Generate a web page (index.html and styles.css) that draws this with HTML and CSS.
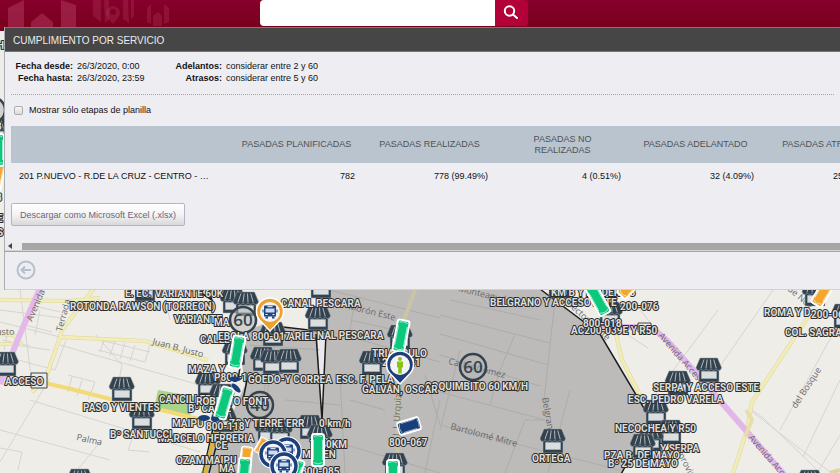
FILE: index.html
```
<!DOCTYPE html>
<html lang="es">
<head>
<meta charset="utf-8">
<meta name="viewport" content="width=device-width, initial-scale=1">
<title>Cumplimiento por servicio</title>
<link rel="stylesheet" href="styles.css">
</head>
<body>
<svg class="map" viewBox="0 0 840 473" preserveAspectRatio="xMinYMin slice" role="img" aria-label="Mapa">
  <defs>
    <g id="shop">
      <path d="M3 10h20v14H3z" fill="#33424f" stroke="#aeb6bb" stroke-width=".5"/>
      <path d="M5.500 13.500h15v7h-15z" fill="#dcdedd" stroke="#9fb3c1" stroke-width=".7"/>
      <path d="M4 0h17.500L25.500 9.500q-.3 3-2.800 3q-2.200 0-2.500-2q-.5 2-2.600 2t-2.500-2q-.5 2-2.600 2t-2.500-2q-.5 2-2.500 2t-2.500-2q-.4 2-2.400 2T0 9.500z" fill="#33424f" stroke="#9aa3a9" stroke-width=".5"/>
      <path d="M8 1.500L5 10M11.200 1.500L10 10M14.500 1.500L15 10M17.700 1.500L20.200 10" stroke="#bfc5c8" stroke-width=".9"/>
    </g>
    <g id="speed">
      <circle r="13" fill="#b5b5b2" fill-opacity=".5" stroke="#34434f" stroke-width="2.500"/>
    </g>
    <g id="bus">
      <path d="M-5 -6.500h10q1 0 1 1V4.500H-6v-10q0-1 1-1z" fill="#1d4484"/>
      <path d="M-4.500 -3.500h9v4h-9z" fill="#cfdbec"/>
      <path d="M-2.500 -5.300h5M-4.500 2.500h2M2.500 2.500h2" stroke="#fff" stroke-width="1"/>
      <path d="M-4.500 4.500h2.500v2h-2.500zM2 4.500h2.500v2H2zM-7.500 -2.500h1v3h-1zM6.500 -2.500h1v3h-1z" fill="#1d4484"/>
    </g>
    <g id="pin">
      <path d="M0 19L-10 8.500A13.500 13.500 0 1 1 10 8.500z" stroke="#fff" stroke-width="1.500"/>
      <circle r="10" fill="#f4f4f2"/>
    </g>
    <g id="vehicle">
      <rect x="-6" y="-16" width="12" height="32" rx="2.500" stroke="#fff" stroke-width="2"/>
      <path d="M-4 -13.500q4-2 8 0M-4.500 12.500q4.500 3 9 0M-4.500 -10v20M4.500 -10v20" fill="none" stroke="#fff" stroke-opacity=".75" stroke-width=".8"/>
    </g>
    <g id="rider">
      <circle r="12" fill="#eef1f5" stroke="#fff" stroke-width="5.500"/>
      <circle r="12" fill="none" stroke="#1d3f7c" stroke-width="3.500"/>
      <use href="#bus"/>
    </g>
  </defs>

  <rect width="840" height="473" fill="#eeede8"/>

  <g class="lane">
    <path d="M0 322L60 337M20 290L32 383M0 310L62 318M60 345L210 388M30 400L200 452M0 462L50 378M96 335L122 365L115 400M100 340L150 352M150 345L145 362L98 350M66 340L55 370L0 355M68 375L95 382L88 400M137 425L128 450L150 452M0 448L22 452L18 470M100 442L75 473M0 430L110 460M25 325L52 332M15 345L50 350M30 305L60 312M165 300L170 320M105 338L100 352M115 340L110 356M125 343L120 359M135 345L130 361M72 377L68 392M82 380L77 396M2 340L30 346M8 330L4 350M40 310L35 335"/>
    <path d="M718 310L655 395M773 290L700 395M835 330L780 430M840 380L803 457M750 410L840 480M752 410L762 417L803 456L820 473M840 435L818 472M640 310L650 322M620 330L648 348"/>
  </g>

  <path d="M158 390L197 397L190 416L154 408z" fill="#a9d48a"/>
  <path class="road casing" d="M0 300L70 301L100 298M60 337L145 341L208 360M95 287L62 330L60 337L45 380L32 392M0 334L14 335L22 345M0 344H16M808 317L752 402L747 430L733 473M615 330L622 360L640 395L650 410M840 470L830 473"/>
  <path class="road" d="M0 300L70 301L100 298M60 337L145 341L208 360M95 287L62 330L60 337L45 380L32 392M0 334L14 335L22 345M0 344H16M808 317L752 402L747 430L733 473M615 330L622 360L640 395L650 410"/>
  <path d="M45 383L75 390L110 399L170 412L202 420" fill="none" stroke="#f4d977" stroke-width="4"/>
  <path d="M45 278Q25 320 0 384" fill="none" stroke="#e3b9ec" stroke-width="6"/>
  <path d="M596 327H648Q660 331 680 355L716 396L787 478" fill="none" stroke="#e1b7ea" stroke-width="6"/>
  <path d="M746 410L752 420L745 437" fill="none" stroke="#e7dfab" stroke-width="4"/>

  <path d="M238 335L270 321L283 327L317 332L322 420L326 332L320 286H536L600 334L651 420L620 476H200L212 440L234 410L245 385z" fill="#bcbbb9"/>
  <g class="lane inner">
    <path d="M440 315L550 343M440 334L548 365M440 355L540 386M440 392L545 420M330 290L440 318M325 330L440 362M515 334L498 375L490 405M555 300L544 400M545 420L525 420L505 473M460 350L440 430M425 375L440 425M330 440L440 473M440 425L620 470M570 390L548 473M350 400L385 410M340 375L345 473M275 345L262 400M285 400L340 405M250 345L320 350M270 370L262 450M350 320L395 330M355 300L350 330M450 300L540 320M440 400L425 473"/>
  </g>
  <path d="M417 285L400 330L397 473" fill="none" stroke="#c9c5a4" stroke-width="4"/>
  <path d="M319 340L324 340L322 405z" fill="#e9e8ef"/>
  <g fill="none" stroke="#1c1c1c" stroke-width="1.500">
    <path d="M536 286L600 334L651 420L620 476M283 327L326 332M316 334L322 420L326 334M190 286L212 300L207 288"/>
    <path d="M213 428L203 473M220 432L209 473M245 335L238 380M292 420L285 437M247 380L243 400"/>
  </g>
  <path d="M217 425L205 473" stroke="#d9b53f" stroke-width="4"/>
  <g fill="#ecebe6" stroke="#444" stroke-width="1"><path d="M31 373h16v15H31zM638 323h13v9h-13z"/></g>

  <g class="street">
    <text transform="translate(32 322) rotate(-67)">Avenida A</text>
    <text transform="translate(62 332) rotate(-75)">Terrada</text>
    <text x="-4" y="335">usto</text>
    <text transform="translate(152 344) rotate(15)">Juan B. Justo</text>
    <text transform="translate(76 440) rotate(12)">Palma</text>
    <text transform="translate(348 309) rotate(14)">Morón Este</text>
    <text transform="translate(458 291) rotate(14)">Monteagudo</text>
    <text transform="translate(448 364) rotate(14)">Carlos Gómez</text>
    <text transform="translate(450 429) rotate(15)">Bartolomé Mitre</text>
    <text transform="translate(542 398) rotate(80)">Belgrano</text>
    <text transform="translate(399 436) rotate(-87)">J. J. Urquiza</text>
    <text transform="translate(658 336) rotate(49)">Avenida Acceso</text>
    <text transform="translate(748 438) rotate(49)">Avenida Acceso</text>
    <text transform="translate(796 409) rotate(-57)">del Bosque</text>
    <text transform="translate(567 305) rotate(42)">Sector Oeste</text>
    <text transform="translate(787 290) rotate(40)">de Nov</text>
    <text transform="translate(678 455) rotate(62)">provincial</text>
  </g>

  <g>
    <use href="#shop" x="132" y="277"/><use href="#shop" x="220" y="289"/><use href="#shop" x="233" y="292"/>
    <use href="#shop" x="-7" y="352"/><use href="#shop" x="109" y="377"/><use href="#shop" x="129" y="405"/>
    <use href="#shop" x="67" y="469"/><use href="#shop" x="195" y="372"/><use href="#shop" x="222" y="341"/>
    <use href="#shop" x="209" y="384"/><use href="#shop" x="211" y="408"/><use href="#shop" x="308" y="274"/>
    <use href="#shop" x="305" y="306"/><use href="#shop" x="250" y="347"/><use href="#shop" x="260" y="350"/>
    <use href="#shop" x="276" y="349"/><use href="#shop" x="359" y="351"/><use href="#shop" x="387" y="325"/>
    <use href="#shop" x="540" y="429"/><use href="#shop" x="546" y="274"/><use href="#shop" x="597" y="302"/>
    <use href="#shop" x="696" y="358"/><use href="#shop" x="665" y="371"/><use href="#shop" x="643" y="400"/>
    <use href="#shop" x="658" y="420"/><use href="#shop" x="638" y="427"/><use href="#shop" x="630" y="434"/>
    <use href="#shop" x="802" y="282"/><use href="#shop" x="831" y="304"/><use href="#shop" x="797" y="470"/>
    <use href="#shop" x="255" y="419"/><use href="#shop" x="267" y="420"/><use href="#shop" x="297" y="415"/>
    <use href="#shop" x="307" y="425"/><use href="#shop" x="382" y="453"/><use href="#shop" x="-17" y="118"/>
    <use href="#shop" x="260" y="322"/>
  </g>

  <g class="limit">
    <use href="#speed" x="243" y="320"/><text x="243" y="326">60</text>
    <use href="#speed" x="260" y="405"/><text x="260" y="411">40</text>
    <use href="#speed" x="473" y="367"/><text x="473" y="373">60</text>
    <use href="#speed" x="-8" y="110"/>
  </g>

  <g class="label">
    <text x="125" y="297">E. EC.</text><text x="155" y="297">VARIANTE 60K</text>
    <text x="70" y="310">ROTONDA RAWSON (TORREON)</text>
    <text x="174" y="323">VARIANTE</text><text x="214" y="326">MA</text>
    <text x="200" y="343">CALLE</text><text x="218" y="340">EBOLA</text>
    <text x="281" y="307">CANAL PESCARA</text>
    <text x="317" y="339">NAL PESCARA</text><text x="288" y="340">ARIEL</text><text x="252" y="340">800-017</text>
    <text x="188" y="373">MAZA Y</text><text x="214" y="381">P800-109</text>
    <text x="248" y="383">GOEDO-Y CORREA</text><text x="336" y="383">ESC. F. PELA</text>
    <text x="372" y="357">TRIANGULO</text><text x="382" y="366">200-041</text>
    <text x="425" y="390">COQUIMBITO 60 KM/H</text><text x="362" y="393">GALVÁN, OSCAR</text>
    <text x="159" y="403">CANCILLER</text><text x="188" y="412">Bº CALLE</text><text x="196" y="405">ROBERTO FONT</text>
    <text x="172" y="427">MAIPU</text><text x="229" y="427">ZO Y TERRE</text><text x="206" y="430">800-118</text>
    <text x="286" y="427">ERR</text><text x="319" y="427">0 km/h</text>
    <text x="158" y="442">MARCELO HERRERIA</text><text x="215" y="449">CE</text>
    <text x="176" y="464">OZAMI</text><text x="205" y="464">MAIPU</text><text x="219" y="472">MA</text>
    <text x="310" y="448">T. 40KM</text><text x="302" y="458">MAYEN</text><text x="301" y="475">800-085</text>
    <text x="389" y="446">800-067</text>
    <text x="83" y="411">PASO Y VIENTES</text><text x="110" y="438">Bº SANTUCCI</text><text x="5" y="385">ACCESO</text>
    <text x="551" y="296">KM B Y LINDERO 8</text><text x="490" y="306">BELGRANO Y ACCESO ESTE</text>
    <text x="571" y="334">AC200-039E Y R50</text><text x="583" y="327">800-018</text><text x="620" y="310">200-076</text>
    <text x="532" y="462">ORTEGA</text>
    <text x="653" y="391">SERPA Y ACCESO ESTE</text><text x="628" y="403">ESC. PEDRO VARELA</text>
    <text x="615" y="432">NECOCHEA Y R50</text><text x="660" y="452">Y SERPA</text>
    <text x="604" y="459">PZA B. DE MAYO</text><text x="608" y="467">Bº 25 DE MAYO</text>
    <text x="764" y="316">ROMA Y D</text><text x="811" y="318">200-067</text><text x="785" y="336">COL. SAGRADO</text>
    <text x="-3" y="49">H</text><text x="-4" y="130">3</text><text x="-4" y="201">8</text><text x="-3" y="222">E</text><text x="-3" y="236">S</text>
  </g>

  <g fill="#f2a62e">
    <use href="#vehicle" transform="translate(-3 176) rotate(12)"/>
    <use href="#vehicle" transform="translate(824 291) rotate(31)"/>
    <use href="#vehicle" transform="translate(632 284) rotate(45)"/>
    <use href="#vehicle" transform="translate(262 446) rotate(28) scale(.8 .5)"/>
    <use href="#vehicle" transform="translate(246 458) rotate(8) scale(.9 .7)"/>
  </g>
  <g fill="#0bc87d">
    <use href="#vehicle" transform="translate(-2 150)"/>
    <use href="#vehicle" transform="translate(401 336) rotate(11)"/>
    <use href="#vehicle" transform="translate(237 352) rotate(10)"/>
    <use href="#vehicle" transform="translate(224 403) rotate(16)"/>
    <use href="#vehicle" transform="translate(598 300) rotate(-29)"/>
    <use href="#vehicle" transform="translate(318 450)"/>
    <use href="#vehicle" transform="translate(393 476)"/>
    <use href="#vehicle" transform="translate(244 474) rotate(5)"/>
    <use href="#vehicle" transform="translate(294 475) rotate(20)"/>
  </g>
  <g fill="#183f7c">
    <use href="#vehicle" transform="translate(409 426) rotate(73) scale(1.050 .7)"/>
    <ellipse cx="235" cy="379" rx="6" ry="2.500"/><ellipse cx="236" cy="388" rx="6" ry="2.500" transform="rotate(45 236 388)"/>
    <ellipse cx="204" cy="418" rx="6" ry="3"/><ellipse cx="215" cy="419" rx="4" ry="2.500"/>
  </g>

  <use href="#rider" x="287" y="451"/><use href="#rider" x="273" y="454"/><use href="#rider" x="284" y="466"/>
  <use href="#pin" x="270" y="312" fill="#eda02c"/><use href="#bus" x="270" y="312"/>
  <use href="#pin" x="400" y="365" fill="#1d3f7c"/>
  <g fill="#8cc21e"><circle cx="400" cy="359" r="2"/><path d="M397 361.500h6v6h-1.200v6h-3.600v-6H397z"/></g>
</svg>

<header class="topbar">
  <svg class="crest" viewBox="0 0 170 31" aria-hidden="true">
    <g fill="#b23a62" fill-opacity=".5">
      <path d="M8 31V8L24 0V31zM61 0L76 5V31H61zM31 31V22L42 13L53 22V31z"/>
      <g fill-opacity=".3">
        <path d="M93 0h8v22l-8-6zM104 0h5v20l-4 3zM123 0h5l1 23-6-4zM131 0h3v16l-3 3z"/>
        <path fill-rule="evenodd" d="M106 13a7 7 0 0 1 14 0q0 4-7 11q-7-7-7-11zm4-1a3 3 0 0 0 6 0a3 3 0 0 0-6 0z"/>
        <path d="M147 8l4-4v20l-4-2zM153 16l5-4 4 4v10h-9zM164 4l5 4v14l-5 2z"/>
      </g>
    </g>
  </svg>
  <form class="search" role="search">
    <input class="search-box" type="search" aria-label="Buscar">
    <button class="search-go" type="button" aria-label="Buscar">
      <svg viewBox="0 0 16 16" aria-hidden="true"><circle cx="6.500" cy="6" r="4.700"/><path d="M10 9.500L14 13"/></svg>
    </button>
  </form>
</header>

<main class="panel">
  <h1 class="panel-title">CUMPLIMIENTO POR SERVICIO</h1>
  <div class="panel-body">
    <dl class="criteria">
      <dt>Fecha desde:</dt><dd>26/3/2020, 0:00</dd>
      <dt>Adelantos:</dt><dd>considerar entre 2 y 60</dd>
      <dt>Fecha hasta:</dt><dd>26/3/2020, 23:59</dd>
      <dt>Atrasos:</dt><dd>considerar entre 5 y 60</dd>
    </dl>
    <div class="option">
      <input type="checkbox" id="only-stages">
      <label for="only-stages">Mostrar sólo etapas de planilla</label>
    </div>
    <table class="report">
      <colgroup><col class="service"><col><col><col><col><col></colgroup>
      <thead>
        <tr><th aria-label="Servicio"></th><th>PASADAS PLANIFICADAS</th><th>PASADAS REALIZADAS</th><th>PASADAS NO<br>REALIZADAS</th><th>PASADAS ADELANTADO</th><th>PASADAS ATRASADO</th></tr>
      </thead>
      <tbody>
        <tr><td>201 P.NUEVO - R.DE LA CRUZ - CENTRO - …</td><td>782</td><td>778 (99.49%)</td><td>4 (0.51%)</td><td>32 (4.09%)</td><td>254 (32.48%)</td></tr>
      </tbody>
    </table>
    <button class="export" type="button">Descargar como Microsoft Excel (.xlsx)</button>
  </div>
  <div class="scroller" aria-hidden="true">
    <svg viewBox="0 0 4 6"><path d="M4 0v6L0 3z"/></svg>
    <span class="thumb"></span>
  </div>
  <footer class="panel-foot">
    <button class="back" type="button" aria-label="Volver">
      <svg viewBox="0 0 20 20" aria-hidden="true"><circle cx="10" cy="10" r="8.500"/><path d="M15 10H5.500M9 6.500L5.500 10L9 13.500"/></svg>
    </button>
  </footer>
</main>
</body>
</html>
```
FILE: styles.css
```
* { box-sizing: border-box; }

body {
  margin: 0;
  min-height: 100vh;
  overflow: hidden;
  position: relative;
  font: 9px/12px "Liberation Sans", Arial, sans-serif;
  color: #111113;
  background: #eeede8;
}

button, input { font: inherit; margin: 0; }

/* Map */
.map { position: absolute; inset: 0; width: 100%; height: 100vh; }
.lane { fill: none; stroke: #d6d5d1; stroke-width: 1; }
.inner { stroke: #adacaa; }
.road { fill: none; stroke: #f2ecb5; stroke-width: 3; }
.casing { stroke: #dcd6a6; stroke-width: 4; }
.street { font: 9px "Open Sans", sans-serif; fill: #68676b; }
.label {
  font: bold 10px Roboto, sans-serif;
  fill: #dededc;
  stroke: #2b2b2b;
  stroke-width: 2px;
  stroke-linejoin: round;
  paint-order: stroke;
}
.limit { font: 600 17px "Open Sans", sans-serif; fill: #34434f; text-anchor: middle; }

/* Top bar */
.topbar {
  position: relative;
  display: flex;
  height: 31px;
  background: linear-gradient(#86002c, #78001c);
}
.crest { width: 170px; height: 31px; margin-right: 90px; flex: none; }
.search { display: flex; height: 26px; }
.search-box {
  width: 235px;
  padding: 0 8px;
  border: 0;
  border-radius: 4px 0 0 4px;
  background: #fff;
  appearance: none;
}
.search-go {
  width: 33px;
  padding: 0 8px;
  border: 0;
  border-radius: 0 4px 4px 0;
  background: #b20038;
}
.search-go svg { display: block; width: 16px; height: 16px; fill: none; stroke: #fff; stroke-width: 2; stroke-linecap: round; }

/* Report window */
.panel {
  position: absolute;
  top: 27px;
  left: 5px;
  right: 0;
  overflow: hidden;
  background: #eeedf2;
  border-bottom: 1px solid #cfd0d6;
  box-shadow: -1px 0 0 #a9adb0;
}
.panel-title {
  margin: 0;
  padding: 2px 8px 0;
  border-top: 1px solid #77777a;
  border-bottom: 1px solid #77777a;
  background: #464646;
  color: #ececec;
  font-size: 10px;
  font-weight: normal;
  line-height: 21px;
}
.panel-body { padding: 8px 6px 16px; }
.criteria {
  display: grid;
  grid-template-columns: 62px 78px 63px auto;
  column-gap: 4px;
  justify-content: start;
  margin: 0;
  padding-bottom: 10px;
  border-bottom: 1px dotted #a4a4a8;
}
.criteria dt { font-weight: bold; text-align: right; }
.criteria dd { margin: 0; white-space: nowrap; }
.option { display: flex; align-items: center; gap: 6px; padding: 9px 3px 10px; }
.option input {
  appearance: none;
  width: 9px;
  height: 9px;
  border: 1px solid #adadb0;
  border-radius: 2px;
  background: linear-gradient(#f6f6f6, #dcdcdc);
}
.report { width: 884px; table-layout: fixed; border-collapse: collapse; }
.report .service { width: 219px; }
.report th {
  height: 37px;
  padding: 0 8px;
  background: #b9c4ce;
  color: #4c5257;
  font-weight: normal;
  line-height: 11px;
}
.report td { height: 26px; padding: 0 8px; text-align: right; white-space: nowrap; }
.report td:first-child { text-align: left; }
.export {
  margin-top: 14px;
  height: 23px;
  padding: 0 8px;
  border: 1px solid #b3b6c2;
  border-radius: 2px;
  background: linear-gradient(#fff, #f4f4f5 50%, #d8d8da);
  color: #6a6480;
}
.scroller {
  display: flex;
  align-items: center;
  gap: 10px;
  height: 9px;
  padding-left: 3px;
  background: #ececee;
  border-bottom: 1px solid #d5d5d8;
}
.scroller svg { width: 4px; height: 6px; fill: #444; flex: none; }
.thumb { flex: 1; height: 7px; background: #a6a6a6; }
.panel-foot { padding: 8px 11px 9px; border-top: 1px solid #a3a4a8; }
.back { display: block; padding: 0; border: 0; background: none; }
.back svg { display: block; width: 20px; height: 20px; fill: none; stroke: #b4c1cd; stroke-width: 2; }
```
